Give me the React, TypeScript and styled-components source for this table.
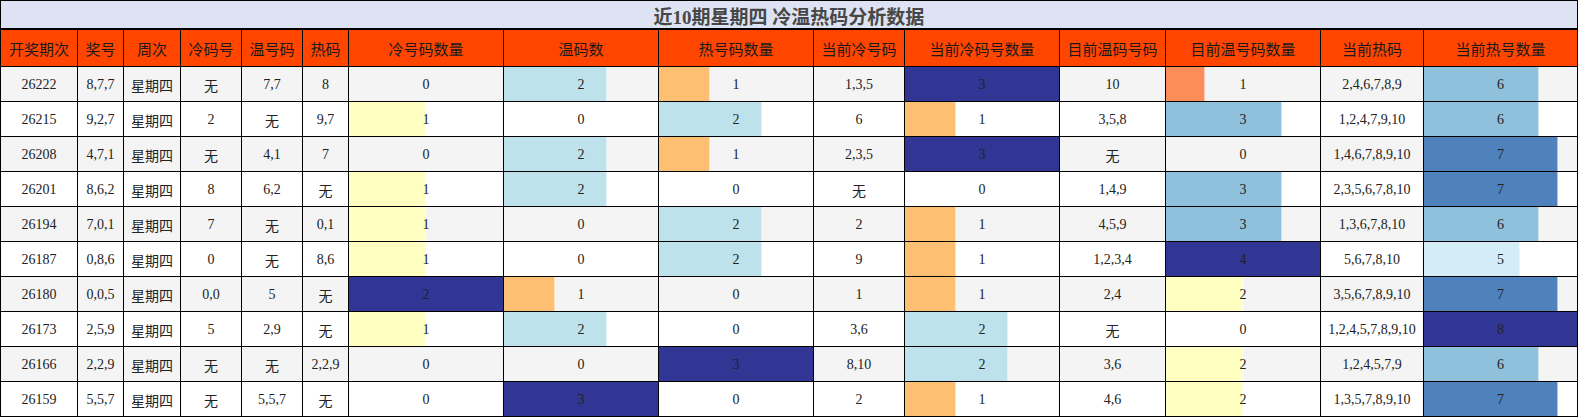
import React from "react";
import styled, { createGlobalStyle } from "styled-components";

const GlobalStyle = createGlobalStyle`
  html, body { margin: 0; padding: 0; background: #fff; }
  * { box-sizing: border-box; }
`;

const COLS = [76, 45, 56, 60, 60, 45, 154, 154, 154, 90, 154, 105, 154, 102, 153];

const HEADERS = [
  "开奖期次", "奖号", "周次", "冷码号", "温号码", "热码", "冷号码数量", "温码数",
  "热号码数量", "当前冷号码", "当前冷码号数量", "目前温码号码", "目前温号码数量", "当前热码", "当前热号数量",
];

// indexes of columns shown as data bars, with the max used for scaling
const BAR_MAX: Record<number, number> = { 6: 2, 7: 3, 8: 3, 10: 3, 12: 4, 14: 8 };

type Row = (string | number)[];

const ROWS: Row[] = [
  ["26222", "8,7,7", "星期四", "无", "7,7", "8", 0, 2, 1, "1,3,5", 3, "10", 1, "2,4,6,7,8,9", 6],
  ["26215", "9,2,7", "星期四", "2", "无", "9,7", 1, 0, 2, "6", 1, "3,5,8", 3, "1,2,4,7,9,10", 6],
  ["26208", "4,7,1", "星期四", "无", "4,1", "7", 0, 2, 1, "2,3,5", 3, "无", 0, "1,4,6,7,8,9,10", 7],
  ["26201", "8,6,2", "星期四", "8", "6,2", "无", 1, 2, 0, "无", 0, "1,4,9", 3, "2,3,5,6,7,8,10", 7],
  ["26194", "7,0,1", "星期四", "7", "无", "0,1", 1, 0, 2, "2", 1, "4,5,9", 3, "1,3,6,7,8,10", 6],
  ["26187", "0,8,6", "星期四", "0", "无", "8,6", 1, 0, 2, "9", 1, "1,2,3,4", 4, "5,6,7,8,10", 5],
  ["26180", "0,0,5", "星期四", "0,0", "5", "无", 2, 1, 0, "1", 1, "2,4", 2, "3,5,6,7,8,9,10", 7],
  ["26173", "2,5,9", "星期四", "5", "2,9", "无", 1, 2, 0, "3,6", 2, "无", 0, "1,2,4,5,7,8,9,10", 8],
  ["26166", "2,2,9", "星期四", "无", "无", "2,2,9", 0, 0, 3, "8,10", 2, "3,6", 2, "1,2,4,5,7,9", 6],
  ["26159", "5,5,7", "星期四", "无", "5,5,7", "无", 0, 3, 0, "2", 1, "4,6", 2, "1,3,5,7,8,9,10", 7],
];

function barColor(ratio: number): string {
  if (ratio >= 0.999) return "#313695";
  if (ratio >= 0.85) return "#4f82bc";
  if (ratio >= 0.7) return "#8fc1dd";
  if (ratio >= 0.65) return "#bee2ec";
  if (ratio >= 0.6) return "#d3ecf5";
  if (ratio >= 0.45) return "#ffffc1";
  if (ratio >= 0.3) return "#fdbf71";
  return "#fc8d59";
}

const Sheet = styled.div`
  width: 1578px;
  border: 1px solid #000;
  font-family: "Liberation Serif", "Noto Sans CJK SC", serif;
`;

const Title = styled.div`
  height: 29px;
  background: #dde3f2;
  border-bottom: 2px solid #000;
  display: flex;
  align-items: center;
  justify-content: center;
  font-family: "Liberation Serif", "Noto Sans CJK SC", sans-serif;
  font-weight: bold;
  font-size: 19px;
  color: #474747;
  padding-top: 1px;
`;

const Grid = styled.div`
  display: grid;
  grid-template-columns: ${COLS.map((c) => `${c}px`).join(" ")};
  grid-template-rows: 36px;
  grid-auto-rows: 34px;
  gap: 1px;
  background: #000;
`;

const HeadCell = styled.div`
  background: #ff4500;
  display: flex;
  align-items: center;
  justify-content: center;
  font-family: "Noto Sans CJK SC", sans-serif;
  font-size: 15px;
  color: #1a1a1a;
  white-space: nowrap;
  padding-top: 1px;
`;

const Cell = styled.div<{ $alt: boolean }>`
  background: ${(p) => (p.$alt ? "#f4f4f4" : "#ffffff")};
  display: flex;
  align-items: center;
  justify-content: center;
  font-size: 14px;
  color: #222;
  white-space: nowrap;
  padding-top: 1px;
`;

const BarCell = styled.div<{ $alt: boolean }>`
  background: ${(p) => (p.$alt ? "#f4f4f4" : "#ffffff")};
  display: grid;
  grid-template: 100% / 100%;
  font-size: 14px;
  color: #222;
`;

const Bar = styled.div<{ $full: boolean }>`
  grid-area: 1 / 1;
  height: 100%;
  box-shadow: ${(p) => (p.$full ? "none" : "inset -1px 0 0 rgba(255,255,255,0.55)")};
`;

const BarValue = styled.span`
  grid-area: 1 / 1;
  display: flex;
  align-items: center;
  justify-content: center;
  padding-top: 1px;
  position: relative;
`;

export default function App() {
  return (
    <>
      <GlobalStyle />
      <Sheet>
        <Title>近10期星期四 冷温热码分析数据</Title>
        <Grid>
          {HEADERS.map((h) => (
            <HeadCell key={h}>{h}</HeadCell>
          ))}
          {ROWS.map((row, ri) =>
            row.map((v, ci) => {
              const alt = ri % 2 === 0;
              const max = BAR_MAX[ci];
              if (max !== undefined) {
                const n = Number(v);
                const ratio = n / max;
                return (
                  <BarCell key={`${ri}-${ci}`} $alt={alt}>
                    {n > 0 && (
                      <Bar
                        $full={ratio >= 0.999}
                        style={{ width: `${ratio * 100}%`, background: barColor(ratio) }}
                      />
                    )}
                    <BarValue>{v}</BarValue>
                  </BarCell>
                );
              }
              return (
                <Cell key={`${ri}-${ci}`} $alt={alt}>
                  {v}
                </Cell>
              );
            })
          )}
        </Grid>
      </Sheet>
    </>
  );
}
